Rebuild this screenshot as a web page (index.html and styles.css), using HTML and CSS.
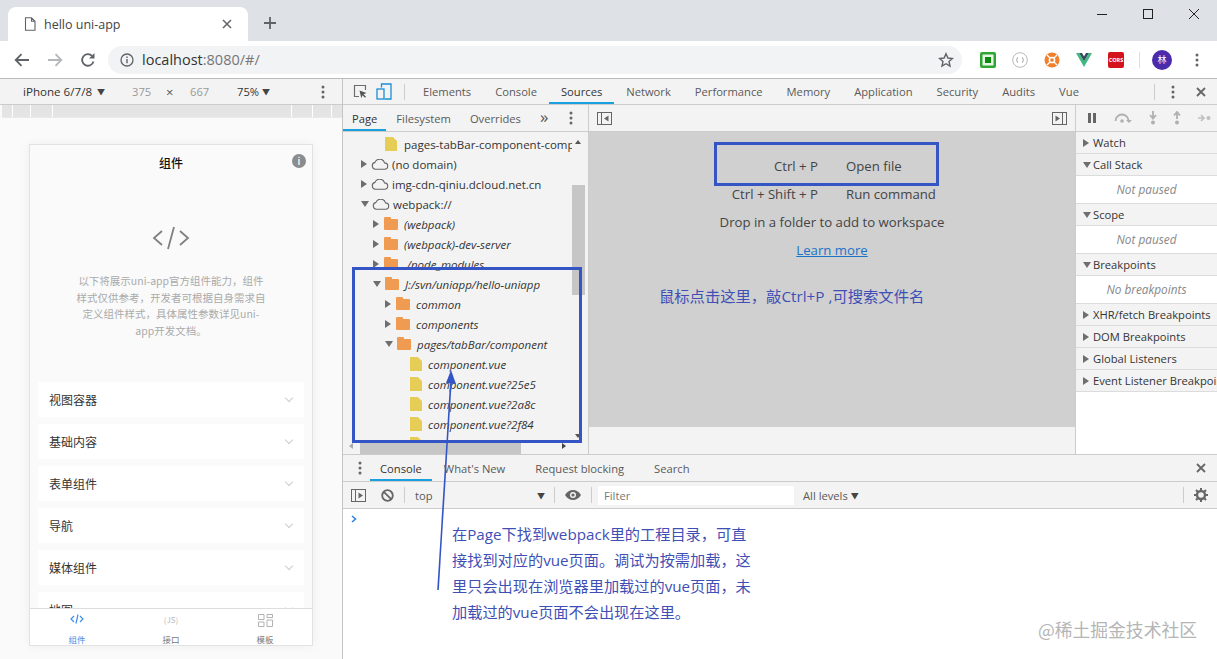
FILE: index.html
```html
<!DOCTYPE html>
<html lang="zh-CN">
<head>
    <meta charset="UTF-8">
    <title>hello uni-app</title>
    <link rel="stylesheet" href="styles.css">
</head>
<body>
    <!-- 标签栏 -->
    <div class="tabstrip">
        <div class="tab">
            <svg class="tab-file" width="12" height="14" viewBox="0 0 12 14"><path d="M1.5 .8h6l3.500 3.500v8.900h-9.500zM7.500 .8v3.500h3.500" fill="none" stroke="#5f6368" stroke-width="1.100"/></svg>
            <span class="tab-title">hello uni-app</span>
            <svg class="tab-close" width="10" height="10" viewBox="0 0 10 10"><path d="M1 1l8 8M9 1l-8 8" stroke="#5f6368" stroke-width="1.500"/></svg>
        </div>
        <svg class="tab-new" width="14" height="14" viewBox="0 0 14 14"><path d="M7 1v12M1 7h12" stroke="#5f6368" stroke-width="1.800"/></svg>
        <div class="win-btns">
            <svg width="12" height="12" viewBox="0 0 12 12"><path d="M1 6.500h10" stroke="#222" stroke-width="1"/></svg>
            <svg width="12" height="12" viewBox="0 0 12 12"><rect x="1.500" y="1.500" width="9" height="9" fill="none" stroke="#222" stroke-width="1"/></svg>
            <svg width="12" height="12" viewBox="0 0 12 12"><path d="M1 1l10 10M11 1L1 11" stroke="#222" stroke-width="1"/></svg>
        </div>
    </div>

    <!-- 地址栏 -->
    <div class="toolbar">
        <svg class="nav-btn" width="16" height="14" viewBox="0 0 16 14"><path d="M15 7H2M7.500 1.200L1.700 7l5.800 5.800" fill="none" stroke="#5f6368" stroke-width="1.800"/></svg>
        <svg class="nav-btn" width="16" height="14" viewBox="0 0 16 14"><path d="M1 7h13M8.500 1.200L14.300 7l-5.800 5.800" fill="none" stroke="#b4b6b9" stroke-width="1.800"/></svg>
        <svg class="nav-btn" width="16" height="16" viewBox="0 0 16 16"><path d="M13.500 9.500a5.800 5.800 0 1 1-1.300-5.500" fill="none" stroke="#5f6368" stroke-width="1.800"/><path d="M14.500 1v5.500H9z" fill="#5f6368"/></svg>
        <div class="omnibox">
            <svg width="14" height="14" viewBox="0 0 14 14"><circle cx="7" cy="7" r="6" fill="none" stroke="#5f6368" stroke-width="1.300"/><path d="M7 6v4.200M7 3.500v1.400" stroke="#5f6368" stroke-width="1.400"/></svg>
            <span class="url">localhost<span class="url-dim">:8080/#/</span></span>
            <svg class="star" width="16" height="16" viewBox="0 0 16 16"><path d="M8 1.800l1.900 4.200 4.500.5-3.400 3 1 4.500L8 11.700 4 14l1-4.500-3.400-3 4.500-.5z" fill="none" stroke="#5f6368" stroke-width="1.400"/></svg>
        </div>
        <div class="extensions">
            <svg width="16" height="16" viewBox="0 0 16 16"><rect width="16" height="16" rx="2" fill="#2ea52e"/><rect x="2.500" y="2.500" width="11" height="11" fill="#e8f5e8"/><rect x="5" y="5" width="6" height="6" fill="#0b8a0b"/></svg>
            <svg width="16" height="16" viewBox="0 0 16 16"><circle cx="8" cy="8" r="7.300" fill="#fff" stroke="#b9b9b9"/><path d="M6 5.500c-1 0-.8 1-.8 1.500s-.7 1-.7 1 .7.500.7 1-.2 1.500.8 1.500M10 5.500c1 0 .8 1 .8 1.500s.7 1 .7 1-.7.500-.7 1 .2 1.500-.8 1.500" fill="none" stroke="#888" stroke-width=".8"/></svg>
            <svg width="16" height="16" viewBox="0 0 16 16"><circle cx="8" cy="8" r="7.500" fill="#f0802c"/><circle cx="8" cy="8" r="2.600" fill="none" stroke="#fff" stroke-width="1.500"/><path d="M3 3l3 3M13 3l-3 3M3 13l3-3M13 13l-3-3" stroke="#fff" stroke-width="1.200"/></svg>
            <svg width="16" height="14" viewBox="0 0 16 14"><path d="M0 0h3.200L8 8.200 12.800 0H16L8 14z" fill="#42b883"/><path d="M3.200 0h2.800L8 3.500 10 0h2.800L8 8.200z" fill="#35495e"/></svg>
            <div class="ext-cors">CORS</div>
        </div>
        <div class="toolbar-sep"></div>
        <div class="avatar">林</div>
        <svg class="dots" width="4" height="14" viewBox="0 0 4 14"><circle cx="2" cy="2" r="1.500"/><circle cx="2" cy="7" r="1.500"/><circle cx="2" cy="12" r="1.500"/></svg>
    </div>

    <div class="main">
        <!-- 左侧设备预览 -->
        <div class="device-pane">
            <div class="device-bar">
                <span class="device-name">iPhone 6/7/8 <i class="tri">▼</i></span>
                <span class="device-size">375</span>
                <span class="device-x">×</span>
                <span class="device-size size-h">667</span>
                <span class="device-zoom">75% <i class="tri">▼</i></span>
                <svg class="dots device-dots" width="4" height="14" viewBox="0 0 4 14"><circle cx="2" cy="2" r="1.500"/><circle cx="2" cy="7" r="1.500"/><circle cx="2" cy="12" r="1.500"/></svg>
            </div>
            <div class="ruler">
                <span class="ruler-a"></span><span class="ruler-b"></span><span class="ruler-c"></span><span class="ruler-d"></span><span class="ruler-e"></span><span class="ruler-f"></span>
            </div>
            <div class="stage">
                <div class="phone">
                    <div class="phone-scroll">
                        <div class="phone-title">
                            组件
                            <span class="phone-info">i</span>
                        </div>
                        <svg class="phone-logo" width="38" height="24" viewBox="0 0 38 24"><path d="M10 5L2 12l8 7M28 5l8 7-8 7M22 1l-6 22" fill="none" stroke="#808080" stroke-width="1.800"/></svg>
                        <p class="phone-desc">以下将展示uni-app官方组件能力，组件样式仅供参考，开发者可根据自身需求自定义组件样式，具体属性参数详见uni-app开发文档。</p>
                        <div class="phone-list">
                            <div class="phone-row">视图容器<i class="chev"></i></div>
                            <div class="phone-row">基础内容<i class="chev"></i></div>
                            <div class="phone-row">表单组件<i class="chev"></i></div>
                            <div class="phone-row">导航<i class="chev"></i></div>
                            <div class="phone-row">媒体组件<i class="chev"></i></div>
                            <div class="phone-row">地图<i class="chev"></i></div>
                        </div>
                    </div>
                    <div class="phone-tabs">
                        <div class="phone-tab tab-on">
                            <svg width="14" height="10" viewBox="0 0 14 10"><path d="M4 2L1 5l3 3M10 2l3 3-3 3M8 .5L6 9.500" fill="none" stroke="#3f8ee8" stroke-width="1.200"/></svg>
                            <span>组件</span>
                        </div>
                        <div class="phone-tab">
                            <span class="js-mark">(JS)</span>
                            <span>接口</span>
                        </div>
                        <div class="phone-tab">
                            <svg width="15" height="13" viewBox="0 0 15 13"><path d="M.5.500h5.500v5H.5zM9 .5h5.500v3H9zM.5 8h5.500v4.500H.5zM9 6h5.500v6.500H9z" fill="none" stroke="#aaa" stroke-width=".9"/></svg>
                            <span>模板</span>
                        </div>
                    </div>
                </div>
            </div>
        </div>

        <!-- 开发者工具 -->
        <div class="devtools">
            <div class="dt-tabs">
                <svg class="dt-ico" width="15" height="15" viewBox="0 0 15 15"><path d="M6 12.500H1.500v-11h11V6" fill="none" stroke="#6e6e6e" stroke-width="1.200"/><path d="M6.500 6.500l7 2.500-3 1.200 2.500 2.500-1 1-2.500-2.500-1.200 3z" fill="#555"/></svg>
                <svg class="dt-ico" width="16" height="17" viewBox="0 0 16 17"><path d="M5.500 4.500V1h9.500v15H8.500" fill="none" stroke="#1a8fd8" stroke-width="1.300"/><rect x="1" y="6" width="7" height="10" fill="none" stroke="#1a8fd8" stroke-width="1.300"/></svg>
                <div class="vsep"></div>
                <span class="dt-tab">Elements</span>
                <span class="dt-tab">Console</span>
                <span class="dt-tab on">Sources</span>
                <span class="dt-tab">Network</span>
                <span class="dt-tab">Performance</span>
                <span class="dt-tab">Memory</span>
                <span class="dt-tab">Application</span>
                <span class="dt-tab">Security</span>
                <span class="dt-tab">Audits</span>
                <span class="dt-tab">Vue</span>
                <div class="vsep dt-tabs-end"></div>
                <svg class="dots" width="4" height="14" viewBox="0 0 4 14"><circle cx="2" cy="2" r="1.500"/><circle cx="2" cy="7" r="1.500"/><circle cx="2" cy="12" r="1.500"/></svg>
                <svg class="dt-x" width="10" height="10" viewBox="0 0 10 10"><path d="M1 1l8 8M9 1l-8 8" stroke="#666" stroke-width="1.800"/></svg>
            </div>

            <div class="sources">
                <div class="navigator">
                    <div class="nav-tabs">
                        <span class="nav-tab on">Page</span>
                        <span class="nav-tab">Filesystem</span>
                        <span class="nav-tab">Overrides</span>
                        <span class="nav-more">»</span>
                        <svg class="dots" width="4" height="14" viewBox="0 0 4 14"><circle cx="2" cy="2" r="1.500"/><circle cx="2" cy="7" r="1.500"/><circle cx="2" cy="12" r="1.500"/></svg>
                    </div>
                    <div class="tree-wrap">
                        <div class="tree">
                            <div class="tree-row lv3"><i class="file"></i><span class="tree-clip">pages-tabBar-component-comp</span></div>
                            <div class="tree-row lv1"><i class="arr"></i><svg class="cloud" width="18" height="11" viewBox="0 0 18 11"><path d="M4.500 10.300a3.500 3.500 0 0 1-.5-6.900 5 5 0 0 1 9.500.5 3.200 3.200 0 0 1 0 6.400z" fill="none" stroke="#666" stroke-width="1.100"/></svg>(no domain)</div>
                            <div class="tree-row lv1"><i class="arr"></i><svg class="cloud" width="18" height="11" viewBox="0 0 18 11"><path d="M4.500 10.300a3.500 3.500 0 0 1-.5-6.900 5 5 0 0 1 9.500.5 3.200 3.200 0 0 1 0 6.400z" fill="none" stroke="#666" stroke-width="1.100"/></svg>img-cdn-qiniu.dcloud.net.cn</div>
                            <div class="tree-row lv1"><i class="arr open"></i><svg class="cloud" width="18" height="11" viewBox="0 0 18 11"><path d="M4.500 10.300a3.500 3.500 0 0 1-.5-6.900 5 5 0 0 1 9.500.5 3.200 3.200 0 0 1 0 6.400z" fill="none" stroke="#666" stroke-width="1.100"/></svg>webpack://</div>
                            <div class="tree-row lv2 em"><i class="arr"></i><i class="folder"></i>(webpack)</div>
                            <div class="tree-row lv2 em"><i class="arr"></i><i class="folder"></i>(webpack)-dev-server</div>
                            <div class="tree-row lv2 em"><i class="arr"></i><i class="folder"></i>./node_modules</div>
                            <div class="tree-row lv2 em"><i class="arr open"></i><i class="folder"></i>J:/svn/uniapp/hello-uniapp</div>
                            <div class="tree-row lv3 em"><i class="arr"></i><i class="folder"></i>common</div>
                            <div class="tree-row lv3 em"><i class="arr"></i><i class="folder"></i>components</div>
                            <div class="tree-row lv3 em"><i class="arr open"></i><i class="folder"></i>pages/tabBar/component</div>
                            <div class="tree-row lv4 em"><i class="file"></i>component.vue</div>
                            <div class="tree-row lv4 em"><i class="file"></i>component.vue?25e5</div>
                            <div class="tree-row lv4 em"><i class="file"></i>component.vue?2a8c</div>
                            <div class="tree-row lv4 em"><i class="file"></i>component.vue?2f84</div>
                            <div class="tree-row lv4 em"><i class="file"></i></div>
                        </div>
                        <div class="vscroll">
                            <i class="up"></i>
                            <div class="vthumb"></div>
                            <i class="down"></i>
                        </div>
                    </div>
                    <div class="hscroll">
                        <i class="left"></i>
                        <div class="hthumb"></div>
                        <i class="right"></i>
                    </div>
                </div>

                <div class="editor">
                    <div class="editor-top">
                        <svg class="pane-ico" width="15" height="13" viewBox="0 0 15 13"><rect x=".5" y=".5" width="14" height="12" fill="none" stroke="#666"/><path d="M4.500 1v11" stroke="#666"/><path d="M11.500 3.500v6L7 6.500z" fill="#666"/></svg>
                        <svg class="pane-ico" width="15" height="13" viewBox="0 0 15 13"><rect x=".5" y=".5" width="14" height="12" fill="none" stroke="#666"/><path d="M10.500 1v11" stroke="#666"/><path d="M3.500 3.500v6L8 6.500z" fill="#666"/></svg>
                    </div>
                    <div class="editor-body">
                        <div class="shortcut"><span class="key">Ctrl + P</span><span class="act">Open file</span></div>
                        <div class="shortcut"><span class="key">Ctrl + Shift + P</span><span class="act">Run command</span></div>
                        <div class="drop">Drop in a folder to add to workspace</div>
                        <a class="learn">Learn more</a>
                    </div>
                    <div class="editor-foot"></div>
                </div>

                <div class="debugger">
                    <div class="dbg-top">
                        <svg width="10" height="10" viewBox="0 0 10 10"><path d="M1 0h3v10H1zM6 0h3v10H6z" fill="#666"/></svg>
                        <svg width="18" height="10" viewBox="0 0 18 10"><path d="M1.500 8a6.500 6.500 0 0 1 13 0" fill="none" stroke="#b0b0b0" stroke-width="1.800"/><circle cx="8" cy="8" r="1.800" fill="#b0b0b0"/><path d="M12 7h6l-3 3z" fill="#b0b0b0"/></svg>
                        <svg width="8" height="14" viewBox="0 0 8 14"><path d="M4 0v6M1 4l3 3.500L7 4" fill="none" stroke="#b0b0b0" stroke-width="1.800"/><circle cx="4" cy="11.500" r="2" fill="#b0b0b0"/></svg>
                        <svg width="8" height="14" viewBox="0 0 8 14"><path d="M4 8V2M1 4.500L4 1l3 3.500" fill="none" stroke="#b0b0b0" stroke-width="1.800"/><circle cx="4" cy="11.500" r="2" fill="#b0b0b0"/></svg>
                        <svg width="13" height="8" viewBox="0 0 13 8"><path d="M0 4h5M3 1l3 3-3 3" fill="none" stroke="#c0c0c0" stroke-width="1.600"/><circle cx="10.500" cy="4" r="2" fill="#c0c0c0"/></svg>
                    </div>
                    <div class="sec"><i class="arr"></i>Watch</div>
                    <div class="sec"><i class="arr open"></i>Call Stack</div>
                    <div class="sec-body">Not paused</div>
                    <div class="sec"><i class="arr open"></i>Scope</div>
                    <div class="sec-body">Not paused</div>
                    <div class="sec"><i class="arr open"></i>Breakpoints</div>
                    <div class="sec-body">No breakpoints</div>
                    <div class="sec"><i class="arr"></i>XHR/fetch Breakpoints</div>
                    <div class="sec"><i class="arr"></i>DOM Breakpoints</div>
                    <div class="sec"><i class="arr"></i>Global Listeners</div>
                    <div class="sec"><i class="arr"></i>Event Listener Breakpoints</div>
                </div>
            </div>

            <div class="drawer">
                <div class="drawer-tabs">
                    <svg class="dots" width="4" height="14" viewBox="0 0 4 14"><circle cx="2" cy="2" r="1.500"/><circle cx="2" cy="7" r="1.500"/><circle cx="2" cy="12" r="1.500"/></svg>
                    <span class="dr-tab on">Console</span>
                    <span class="dr-tab">What's New</span>
                    <span class="dr-tab">Request blocking</span>
                    <span class="dr-tab">Search</span>
                    <svg class="dt-x drawer-x" width="10" height="10" viewBox="0 0 10 10"><path d="M1 1l8 8M9 1l-8 8" stroke="#666" stroke-width="1.800"/></svg>
                </div>
                <div class="console-bar">
                    <svg width="15" height="13" viewBox="0 0 15 13"><rect x=".5" y=".5" width="14" height="12" fill="none" stroke="#666"/><path d="M4.500 1v11" stroke="#666"/><path d="M7.500 3.500v6L12 6.500z" fill="#666"/></svg>
                    <svg class="no-ico" width="13" height="13" viewBox="0 0 13 13"><circle cx="6.500" cy="6.500" r="5.300" fill="none" stroke="#666" stroke-width="1.800"/><path d="M2.800 2.800l7.400 7.400" stroke="#666" stroke-width="1.800"/></svg>
                    <div class="vsep"></div>
                    <span class="ctx">top</span>
                    <i class="tri ctx-tri">▼</i>
                    <div class="vsep"></div>
                    <svg class="eye" width="16" height="10" viewBox="0 0 16 10"><path d="M0 5c2-3.500 5-5 8-5s6 1.500 8 5c-2 3.500-5 5-8 5S2 8.500 0 5z" fill="#666"/><circle cx="8" cy="5" r="3" fill="#f3f3f3"/><circle cx="8" cy="5" r="1.600" fill="#666"/></svg>
                    <div class="vsep"></div>
                    <div class="filter">Filter</div>
                    <span class="levels">All levels <i class="tri">▼</i></span>
                    <div class="vsep bar-end"></div>
                    <svg width="14" height="14" viewBox="0 0 14 14"><circle cx="7" cy="7" r="4" fill="none" stroke="#666" stroke-width="2.400"/><path d="M7 0v3M7 11v3M0 7h3M11 7h3M2 2l2 2M10 10l2 2M12 2l-2 2M4 10l-2 2" stroke="#666" stroke-width="2"/></svg>
                </div>
                <div class="console-body">
                    <svg class="prompt" width="7" height="8" viewBox="0 0 7 8"><path d="M1 1l3.500 3L1 7" fill="none" stroke="#2a7de1" stroke-width="1.500"/></svg>
                </div>
            </div>
        </div>
    </div>

    <!-- 截图上的标注 -->
    <div class="mark mark-open"></div>
    <div class="mark mark-tree"></div>
    <svg class="mark-arrow" width="30" height="225" viewBox="0 0 30 225"><path d="M8 222L21 12" stroke="#3555c5" stroke-width="1.600"/><path d="M21 2l5 14-10-1z" fill="#3555c5"/></svg>
    <div class="note note-search">鼠标点击这里，敲Ctrl+P ,可搜索文件名</div>
    <div class="note note-page">在Page下找到webpack里的工程目录，可直接找到对应的vue页面。调试为按需加载，这里只会出现在浏览器里加载过的vue页面，未加载过的vue页面不会出现在这里。</div>
    <div class="watermark">@稀土掘金技术社区</div>
</body>
</html>
```

FILE: styles.css
```css
* {
    box-sizing: border-box;
    margin: 0;
    padding: 0;
}

html, body {
    width: 1217px;
    height: 659px;
    overflow: hidden;
}

body {
    position: relative;
    font-family: "Open Sans", "Noto Sans", "Noto Sans CJK SC", sans-serif;
    font-size: 11.200px;
    color: #333;
    background: #fff;
}

i {
    font-style: normal;
}

.dots {
    fill: #666;
    flex: none;
}

.vsep {
    width: 1px;
    height: 16px;
    background: #ccc;
    flex: none;
}

.tri {
    font-size: 8px;
    color: #444;
    vertical-align: 1px;
}

/* 标签栏 */
.tabstrip {
    height: 41px;
    background: #dee1e6;
    display: flex;
    align-items: flex-end;
    padding-left: 8px;
}

.tab {
    width: 240px;
    height: 34px;
    background: #fff;
    border-radius: 8px 8px 0 0;
    display: flex;
    align-items: center;
    padding: 0 16px;
}

.tab-title {
    margin-left: 8px;
    font-size: 12.500px;
    color: #444;
    flex: 1;
}

.tab-new {
    margin: 0 0 11px 15px;
}

.win-btns {
    margin-left: auto;
    display: flex;
    gap: 34px;
    padding: 0 17px 21px 0;
}

/* 地址栏 */
.toolbar {
    height: 37px;
    display: flex;
    align-items: center;
    padding-left: 14px;
    background: #fff;
}

.nav-btn {
    margin-right: 17px;
    flex: none;
}

.omnibox {
    width: 854px;
    height: 28px;
    margin-left: -5px;
    background: #f1f3f4;
    border-radius: 14px;
    display: flex;
    align-items: center;
    padding: 0 8px 0 12px;
}

.url {
    margin-left: 8px;
    font-size: 14.500px;
    color: #333;
}

.url-dim {
    color: #777;
}

.star {
    margin-left: auto;
}

.extensions {
    display: flex;
    align-items: center;
    gap: 16px;
    margin-left: 18px;
}

.ext-cors {
    width: 16px;
    height: 16px;
    background: #d3141c;
    border-radius: 2px;
    color: #fff;
    font-size: 5.500px;
    font-weight: 700;
    line-height: 16px;
    text-align: center;
    overflow: hidden;
}

.toolbar-sep {
    width: 1px;
    height: 16px;
    background: #ddd;
    margin-left: 15px;
}

.avatar {
    width: 20px;
    height: 20px;
    margin-left: 12px;
    border-radius: 50%;
    background: #4a2bab;
    color: #fff;
    font-family: "Noto Sans CJK SC", sans-serif;
    font-size: 9px;
    line-height: 20px;
    text-align: center;
}

.toolbar .dots {
    margin-left: 23px;
}

.main {
    height: 581px;
    display: flex;
    border-top: 1px solid #bbb;
}

/* 左侧设备预览 */
.device-pane {
    width: 343px;
    flex: none;
    display: flex;
    flex-direction: column;
    border-right: 1px solid #c4c4c4;
    background: #fafafa;
}

.device-bar {
    height: 26px;
    background: #f3f3f3;
    border-bottom: 1px solid #ccc;
    display: flex;
    align-items: center;
    padding: 0 17px 0 23px;
}

.device-name {
    width: 109px;
    font-size: 11.600px;
    color: #333;
}

.device-name .tri {
    margin-left: 2px;
}

.device-size {
    width: 20px;
    color: #999;
}

.device-x {
    width: 17px;
    margin-left: 14px;
    color: #555;
    font-size: 13px;
}

.size-h {
    margin-left: 7px;
}

.device-zoom {
    margin-left: 27px;
    color: #333;
}

.device-dots {
    margin-left: auto;
}

.ruler {
    height: 13px;
    background: #e4e4e4;
    display: flex;
    gap: 1px;
    margin: 0 0 0 2px;
    border-bottom: 1px solid #eaeaea;
}

.ruler span {
    background: #e4e4e4;
    border-right: 1px solid #fff;
}

.ruler-a { width: 11px; }
.ruler-b { width: 17px; }
.ruler-c { width: 21px; }
.ruler-d { width: 238px; }
.ruler-e { width: 20px; }
.ruler-f { width: 18px; }

.stage {
    flex: 1;
    min-height: 0;
    padding: 26px 29px 13px 29px;
}

.phone {
    height: 100%;
    background: #fafafa;
    border: 1px solid #e2e2e2;
    box-shadow: 0 0 10px rgba(0, 0, 0, 0.05);
    display: flex;
    flex-direction: column;
    font-family: "Noto Sans CJK SC", "Noto Sans", sans-serif;
}

.phone-scroll {
    flex: 1;
    min-height: 0;
    overflow: hidden;
    text-align: center;
}

.phone-title {
    position: relative;
    height: 36px;
    line-height: 35px;
    font-size: 12px;
    font-weight: 500;
    color: #111;
}

.phone-info {
    position: absolute;
    top: 9px;
    right: 6px;
    width: 14px;
    height: 14px;
    border-radius: 50%;
    background: #8c8c8c;
    color: #fff;
    font-size: 10px;
    line-height: 14px;
}

.phone-logo {
    display: block;
    margin: 45px auto 0;
}

.phone-desc {
    width: 190px;
    margin: 23px auto 0;
    font-size: 10.500px;
    line-height: 16.500px;
    color: #aaa;
}

.phone-list {
    margin: 43px 8px 0;
    display: flex;
    flex-direction: column;
    gap: 7px;
}

.phone-row {
    height: 35px;
    background: #fff;
    display: flex;
    align-items: center;
    justify-content: space-between;
    padding: 0 12px 0 11px;
    font-size: 12px;
    color: #333;
}

.chev {
    width: 6px;
    height: 6px;
    border-right: 1px solid #ccc;
    border-bottom: 1px solid #ccc;
    transform: rotate(45deg);
    margin-top: -3px;
}

.phone-tabs {
    height: 37px;
    background: #fff;
    border-top: 1px solid #ddd;
    display: flex;
    flex: none;
}

.phone-tab {
    flex: 1;
    display: flex;
    flex-direction: column;
    align-items: center;
    justify-content: space-between;
    padding: 5px 0 0;
    font-size: 8.500px;
    line-height: 11px;
    color: #777;
}

.tab-on {
    color: #3f8ee8;
}

.js-mark {
    font-size: 8px;
    color: #bbb;
}

/* 开发者工具 */
.devtools {
    width: 874px;
    flex: none;
    display: flex;
    flex-direction: column;
    background: #f3f3f3;
}

.dt-tabs {
    height: 26px;
    display: flex;
    align-items: center;
    border-bottom: 1px solid #ccc;
    padding-left: 10px;
    flex: none;
}

.dt-ico {
    margin-right: 8px;
    flex: none;
}

.dt-tabs .vsep {
    margin: 0 6px 0 4px;
}

.dt-tab {
    height: 25px;
    line-height: 26px;
    padding: 0 12px;
    color: #5a5a5a;
    white-space: nowrap;
}

.dt-tab.on,
.nav-tab.on,
.dr-tab.on {
    color: #333;
    border-bottom: 2px solid #1a9fe0;
}

.dt-tabs .dt-tabs-end {
    margin-left: auto;
    margin-right: 16px;
}

.dt-x {
    margin: 0 11px 0 21px;
    flex: none;
}

.sources {
    height: 350px;
    display: flex;
    flex: none;
    border-bottom: 1px solid #ccc;
}

/* Page 树 */
.navigator {
    width: 246px;
    flex: none;
    border-right: 1px solid #ccc;
    display: flex;
    flex-direction: column;
}

.nav-tabs {
    height: 27px;
    display: flex;
    align-items: center;
    border-bottom: 1px solid #ccc;
    flex: none;
}

.nav-tab {
    height: 26px;
    line-height: 27px;
    padding: 0 9px;
    margin-right: 1px;
    color: #5a5a5a;
}

.nav-more {
    margin: -4px 21px 0 9px;
    font-size: 17px;
    color: #555;
}

.tree-wrap {
    flex: 1;
    min-height: 0;
    display: flex;
    overflow: hidden;
}

.tree {
    flex: 1;
    min-width: 0;
    overflow: hidden;
    padding-top: 2px;
    font-size: 11.500px;
}

.tree-row {
    height: 20px;
    display: flex;
    align-items: center;
    white-space: nowrap;
    color: #333;
}

.tree-row.em {
    font-style: italic;
}

.lv1 { padding-left: 18px; }
.lv2 { padding-left: 30px; }
.lv3 { padding-left: 42px; }
.lv4 { padding-left: 67px; }

.tree-clip {
    width: 168px;
    overflow: hidden;
}

.arr {
    width: 0;
    height: 0;
    margin-right: 4px;
    border-style: solid;
    border-width: 4px 0 4px 6px;
    border-color: transparent transparent transparent #6e6e6e;
    flex: none;
}

.arr.open {
    margin-right: 3px;
    border-width: 6px 4px 0;
    border-color: #6e6e6e transparent transparent;
}

.folder {
    position: relative;
    width: 14px;
    height: 11px;
    margin: 1px 6px 0 1px;
    background: #ef9b52;
    border-radius: 1px;
    flex: none;
}

.folder::before {
    content: '';
    position: absolute;
    left: 0;
    top: -2px;
    width: 7px;
    height: 3px;
    background: #ef9b52;
    border-radius: 1px 1px 0 0;
}

.file {
    width: 12px;
    height: 14px;
    margin-right: 6px;
    background: #e6cd55;
    clip-path: polygon(0 0, 65% 0, 100% 28%, 100% 100%, 0 100%);
    flex: none;
}

.lv3 > .file {
    margin-right: 7px;
}

.cloud {
    margin-right: 3px;
    flex: none;
}

.vscroll {
    position: relative;
    width: 13px;
    margin-right: 3px;
    flex: none;
}

.vthumb {
    position: absolute;
    top: 53px;
    left: 0;
    width: 13px;
    height: 110px;
    background: #c6c6c6;
}

.up,
.down {
    position: absolute;
    left: 3px;
    width: 0;
    height: 0;
    border-left: 3.500px solid transparent;
    border-right: 3.500px solid transparent;
}

.up {
    top: 8px;
    border-bottom: 4px solid #555;
}

.down {
    bottom: 2px;
    border-top: 4px solid #555;
}

.hscroll {
    position: relative;
    height: 14px;
    flex: none;
}

.hthumb {
    position: absolute;
    left: 17px;
    top: 0;
    width: 161px;
    height: 14px;
    background: #c6c6c6;
}

.left,
.right {
    position: absolute;
    top: 3px;
    width: 0;
    height: 0;
    border-top: 3.500px solid transparent;
    border-bottom: 3.500px solid transparent;
}

.left {
    left: 6px;
    border-right: 4px solid #aaa;
}

.right {
    left: 219px;
    border-left: 4px solid #444;
}

/* 编辑区 */
.editor {
    width: 487px;
    flex: none;
    display: flex;
    flex-direction: column;
    border-right: 1px solid #ccc;
}

.editor-top {
    height: 27px;
    display: flex;
    align-items: center;
    justify-content: space-between;
    padding: 0 8px;
    border-bottom: 1px solid #ccc;
    flex: none;
}

.pane-ico {
    flex: none;
}

.editor-body {
    flex: 1;
    background: #d0d0d0;
    display: flex;
    flex-direction: column;
    align-items: center;
    padding-top: 20px;
    font-size: 13.200px;
    color: #444;
}

.shortcut {
    width: 100%;
    height: 28px;
    display: flex;
    line-height: 28px;
}

.key {
    width: 229px;
    text-align: right;
}

.act {
    margin-left: 28px;
}

.drop {
    height: 28px;
    line-height: 28px;
}

.learn {
    line-height: 28px;
    color: #1a73c8;
    text-decoration: underline;
}

.editor-foot {
    height: 27px;
    flex: none;
}

/* 右侧调试面板 */
.debugger {
    flex: 1;
    min-width: 0;
    background: #fff;
    overflow: hidden;
}

.dbg-top {
    height: 27px;
    background: #f3f3f3;
    border-bottom: 1px solid #ccc;
    display: flex;
    align-items: center;
    justify-content: space-between;
    padding: 0 6px 0 11px;
}

.sec {
    height: 22px;
    background: #f3f3f3;
    border-bottom: 1px solid #dcdcdc;
    display: flex;
    align-items: center;
    padding-left: 7px;
    white-space: nowrap;
    color: #333;
}

.sec .arr {
    margin-right: 4px;
}

.sec .arr.open {
    margin-right: 2px;
}

.sec-body {
    height: 28px;
    line-height: 27px;
    text-align: center;
    font-size: 11.800px;
    font-style: italic;
    color: #888;
    border-bottom: 1px solid #dcdcdc;
}

/* 控制台 */
.drawer {
    flex: 1;
    min-height: 0;
    display: flex;
    flex-direction: column;
}

.drawer-tabs {
    height: 27px;
    display: flex;
    align-items: center;
    border-bottom: 1px solid #ccc;
    padding-left: 15px;
    flex: none;
}

.drawer-tabs .dots {
    margin-right: 8px;
}

.dr-tab {
    height: 26px;
    line-height: 27px;
    padding: 0 10px;
    color: #5a5a5a;
    margin-right: 10px;
}

.dr-tab.on {
    margin-right: 2px;
}

.drawer-x {
    margin-left: auto;
}

.console-bar {
    height: 27px;
    display: flex;
    align-items: center;
    border-bottom: 1px solid #ccc;
    padding-left: 8px;
    flex: none;
}

.no-ico {
    margin: 0 10px 0 15px;
}

.ctx {
    width: 122px;
    margin-left: 10px;
    color: #5a5a5a;
}

.ctx-tri {
    margin-right: 9px;
}

.eye {
    margin: 0 10px;
}

.filter {
    width: 196px;
    height: 19px;
    margin-left: 6px;
    padding-left: 6px;
    background: #fff;
    line-height: 19px;
    color: #777;
}

.levels {
    margin-left: 9px;
    color: #5a5a5a;
}

.bar-end {
    margin-left: auto;
    margin-right: 10px;
}

.console-bar > svg:last-child {
    margin-right: 9px;
}

.console-body {
    flex: 1;
    background: #fff;
    padding: 6px 0 0 8px;
}

.prompt {
    display: block;
}

/* 截图上的标注 */
.mark {
    position: absolute;
    border: 3px solid #3555c5;
}

.mark-open {
    left: 714px;
    top: 142px;
    width: 225px;
    height: 44px;
}

.mark-tree {
    left: 352px;
    top: 267px;
    width: 230px;
    height: 176px;
}

.mark-arrow {
    position: absolute;
    left: 430px;
    top: 368px;
}

.note {
    position: absolute;
    color: #3f4fb5;
    font-family: "Open Sans", "Noto Sans CJK SC", sans-serif;
}

.note-search {
    left: 659px;
    top: 286px;
    font-size: 15.300px;
    line-height: 20px;
}

.note-page {
    left: 452px;
    top: 521px;
    width: 304px;
    font-size: 15.200px;
    line-height: 26px;
}

.watermark {
    position: absolute;
    right: 20px;
    top: 617px;
    font-family: "Noto Sans CJK SC", sans-serif;
    font-size: 17.800px;
    line-height: 24px;
    color: #b5b5b5;
}
```
